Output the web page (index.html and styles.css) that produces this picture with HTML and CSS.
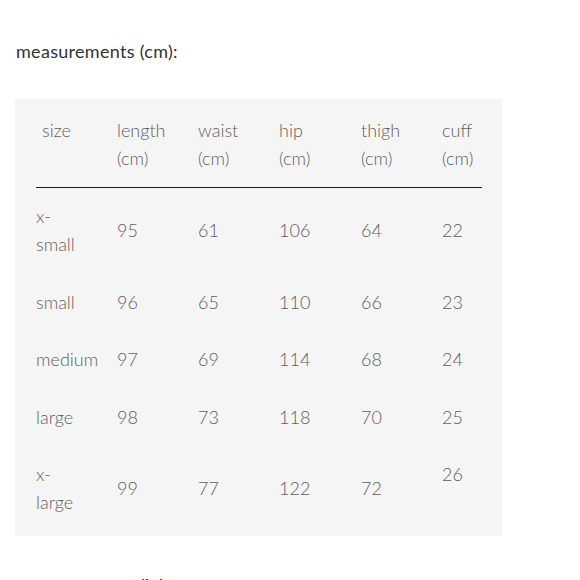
FILE: index.html
```html
<!DOCTYPE html>
<html lang="en">
<head>
<meta charset="utf-8">
<title>measurements</title>
<link rel="stylesheet" href="styles.css">
</head>
<body>
<h2 class="title">measurements (cm):</h2>
<div class="panel">
  <table class="sizes">
    <colgroup>
      <col class="c1"><col class="c2"><col class="c3"><col class="c4"><col class="c5"><col class="c6">
    </colgroup>
    <thead>
      <tr>
        <th class="first">size</th>
        <th>length<br>(cm)</th>
        <th>waist<br>(cm)</th>
        <th>hip<br>(cm)</th>
        <th>thigh<br>(cm)</th>
        <th>cuff<br>(cm)</th>
      </tr>
    </thead>
    <tbody>
      <tr><td>x-<br>small</td><td>95</td><td>61</td><td>106</td><td>64</td><td>22</td></tr>
      <tr><td>small</td><td>96</td><td>65</td><td>110</td><td>66</td><td>23</td></tr>
      <tr><td>medium</td><td>97</td><td>69</td><td>114</td><td>68</td><td>24</td></tr>
      <tr><td>large</td><td>98</td><td>73</td><td>118</td><td>70</td><td>25</td></tr>
      <tr><td>x-<br>large</td><td>99</td><td>77</td><td>122</td><td>72</td><td class="top">26</td></tr>
    </tbody>
  </table>
</div>
<h2 class="title next">measurements (in):</h2>
</body>
</html>
```
FILE: styles.css
```css
html, body {
  margin: 0;
  padding: 0;
  background: #ffffff;
}
body {
  padding: 0 15px;
  font-family: Lato, "Open Sans", "Liberation Sans", sans-serif;
}
.title {
  margin: 0;
  padding: 40px 0 0 1px;
  height: 99px;
  box-sizing: border-box;
  font-size: 18px;
  font-weight: 400;
  letter-spacing: 0.3px;
  line-height: 22px;
  color: #333333;
}
.title.next {
  padding-top: 38px;
  height: auto;
}
.panel {
  width: 487px;
  box-sizing: border-box;
  background: #f5f5f5;
  padding: 0 20px 4px 21px;
}
.sizes {
  width: 446px;
  border-collapse: collapse;
  table-layout: fixed;
  font-size: 18px;
  font-weight: 300;
  line-height: 28px;
  color: #606060;
}
.c1, .c2, .c3, .c5 { width: 81px; }
.c4 { width: 82px; }
.c6 { width: auto; }
.sizes th {
  text-align: left;
  font-weight: 300;
  vertical-align: top;
  padding: 17px 0 15px 0;
  border-bottom: 1px solid #1c1c1c;
}
.sizes th.first {
  padding-left: 6px;
}
.sizes td {
  padding: 14px 0 15.5px 0;
  vertical-align: middle;
}
.sizes td.top {
  vertical-align: top;
}
```
